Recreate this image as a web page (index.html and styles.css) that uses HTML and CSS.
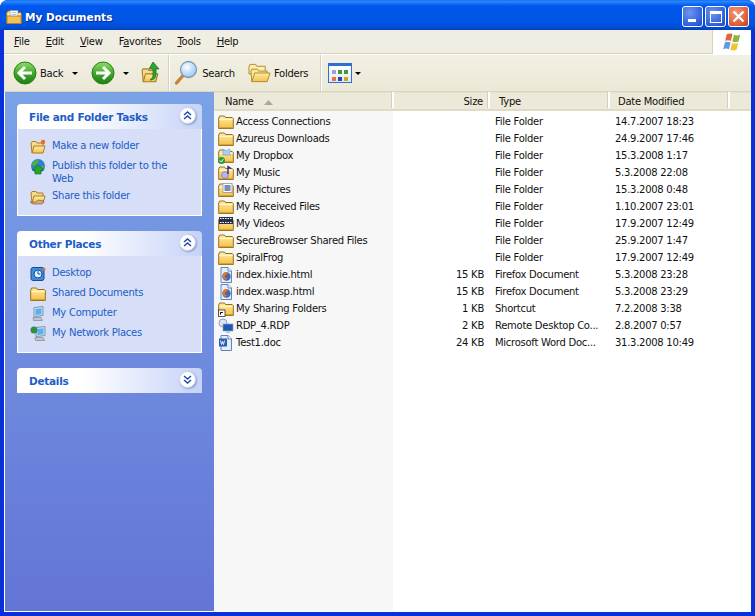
FILE: index.html
```html
<!DOCTYPE html>
<html lang="en">
<head>
<meta charset="utf-8">
<title>My Documents</title>
<link rel="stylesheet" href="styles.css">
</head>
<body>
<svg class="defs" width="0" height="0" aria-hidden="true">
  <defs>
    <linearGradient id="fold" x1="0" y1="0" x2="0" y2="1"><stop offset="0" stop-color="#ffeea6"/><stop offset="1" stop-color="#f3bf48"/></linearGradient>
    <linearGradient id="grn" x1="0" y1="0" x2="0" y2="1"><stop offset="0" stop-color="#8fdc68"/><stop offset=".55" stop-color="#3aa626"/><stop offset="1" stop-color="#1c7f16"/></linearGradient>
    <radialGradient id="lens" cx=".4" cy=".35" r=".7"><stop offset="0" stop-color="#fff"/><stop offset="1" stop-color="#8fc3f2"/></radialGradient>
    <symbol id="folder" viewBox="0 0 16 16">
      <path d="M.7 4 1.700 2h4.800l1 1.500H14.300l1 1V14.500H.7z" fill="url(#fold)" stroke="#96701c" stroke-width="1" stroke-linejoin="round"/>
      <path d="M1.500 5.500h13" stroke="#fff6cc" stroke-width="1"/>
      <path d="M1.500 13.700h13" stroke="#d49a28" stroke-width="1"/>
    </symbol>
    <symbol id="openfolder" viewBox="0 0 16 16">
      <path d="M2 14 1 4l1-1.500h4L7 4h6v3" fill="#f6d98a" stroke="#a97e24"/>
      <path d="M2 14 4 7h11l-2 7z" fill="url(#fold)" stroke="#a97e24" stroke-linejoin="round"/>
    </symbol>
    <symbol id="doc" viewBox="0 0 16 16">
      <path d="M3 .5h7l3.500 3.500v11.500H3z" fill="#e4eefa" stroke="#5e86bc"/>
      <path d="M10 .5v3.500h3.500" fill="#fff" stroke="#5e86bc"/>
    </symbol>
    <symbol id="globe" viewBox="0 0 16 16">
      <circle cx="8" cy="7" r="7" fill="#2f7fd8"/>
      <path d="M3 3c2-2 5-2 6-1 0 2-2 2-3 4S3 6 2 6zM11 7c2-1 3 0 3 1-1 2-3 3-3 2z" fill="#4fae3c"/>
      <path d="M8 6l6 5h-3v4H5v-4H2z" fill="#22a82a" stroke="#0f6a14" stroke-width=".6"/>
    </symbol>
    <symbol id="pc" viewBox="0 0 16 16">
      <path d="M4 1.500 13 .500v9l-9 1z" fill="#cfe0f4" stroke="#7f94ae"/>
      <path d="M5.500 3 11.500 2.200v6l-6 .8z" fill="#58b0ee"/>
      <path d="M3 11.500h8l1.500 3h-9z" fill="#c2c6cf" stroke="#7f8694" stroke-width=".7"/>
    </symbol>
    <symbol id="ff" viewBox="0 0 16 16">
      <use href="#doc"/>
      <circle cx="8.500" cy="9.500" r="4.200" fill="#3c68b8"/>
      <path d="M5 7c1-2 4-2.500 5.500-1.500L9 6.500c.8.200 1 .8.300 1.200-1.500-.5-2.500 .5-2.300 2 .2 1.500 2 2 3.500 1-1 1.300-2.800 2.200-4 1.800C4.500 11.500 4.300 9 5 7z" fill="#e8761e"/>
    </symbol>
  </defs>
</svg>

<div class="window">
  <header class="titlebar">
    <svg class="title-icon" viewBox="0 0 16 16"><use href="#folder"/><path d="M4 1.500h8v7H4z" fill="#fff" stroke="#8c96a8" stroke-width=".7"/><path d="M5.500 3.500h5M5.500 5.500h5" stroke="#9fb1ce" stroke-width=".8"/><path d="M1 7h14v7.500H1z" fill="#efc25d" stroke="#a97e24" stroke-width=".8"/></svg>
    <span class="title-text">My Documents</span>
    <div class="win-btns">
      <div class="win-btn"><span class="glyph-min"></span></div>
      <div class="win-btn"><span class="glyph-max"></span></div>
      <div class="win-btn close"><svg viewBox="0 0 13 13" class="glyph-x"><path d="M1.500 1.500l10 10M11.500 1.500l-10 10" stroke="#fff" stroke-width="2.400"/></svg></div>
    </div>
  </header>

  <nav class="menubar">
    <div class="menus">
      <span><u>F</u>ile</span><span><u>E</u>dit</span><span><u>V</u>iew</span><span>F<u>a</u>vorites</span><span><u>T</u>ools</span><span><u>H</u>elp</span>
    </div>
    <div class="brand">
      <svg viewBox="0 0 24 20" class="flag">
        <path d="M6 2c2-1 5-1 6 0l-1.700 7c-2-1-4-1-6 0z" fill="#e8643a"/>
        <path d="M13.500 2.500c2 1 4 1 6.500 0l-1.700 7c-2.500 1-4.500 1-6.500 0z" fill="#8ab83c"/>
        <path d="M4 10.500c2-1 4-1 6 0L8.300 17.500c-2-1-4-1-6 0z" fill="#5a9ae6"/>
        <path d="M11.500 11c2 1 4 1 6.500 0l-1.800 7c-2.500 1-4.500 1-6.400 0z" fill="#f2c230"/>
      </svg>
    </div>
  </nav>

  <div class="toolbar">
    <svg class="nav-ic" viewBox="0 0 24 24"><circle cx="12" cy="12" r="11" fill="url(#grn)" stroke="#2b7a1e"/><path d="M19 12H7M12 6l-6 6 6 6" fill="none" stroke="#fff" stroke-width="3"/></svg>
    <span class="tb-label back-label">Back</span>
    <span class="caret back-caret"></span>
    <svg class="nav-ic fwd" viewBox="0 0 24 24"><circle cx="12" cy="12" r="11" fill="url(#grn)" stroke="#2b7a1e"/><path d="M5 12h12M12 6l6 6-6 6" fill="none" stroke="#fff" stroke-width="3"/></svg>
    <span class="caret fwd-caret"></span>
    <svg class="up-ic" viewBox="0 0 20 24"><use href="#openfolder" x="0" y="4" width="18" height="20"/><path d="M12 1 18 8h-3v6c0 3-3 5-6 5 2-1 3-3 3-5V8H8z" fill="#2fa52f" stroke="#11691a" stroke-width=".7"/></svg>
    <span class="tb-sep first-sep"></span>
    <svg class="search-ic" viewBox="0 0 24 26"><path d="M9.500 15 2.500 23" stroke="#c8823a" stroke-width="3.400" stroke-linecap="round"/><circle cx="14.500" cy="9.500" r="8" fill="url(#lens)" stroke="#7e9ab8" stroke-width="1.300"/></svg>
    <span class="tb-label search-label">Search</span>
    <svg class="folders-ic" viewBox="0 0 24 20"><path d="M1 4 2 1h6l1 2h9v8H1z" fill="#fdeeb0" stroke="#b08a2c"/><path d="M4 19 3 8l1-2h6l1 2h9v2" fill="#fbe59a" stroke="#b08a2c"/><path d="M4 19 7 10h16l-3 9z" fill="url(#fold)" stroke="#b08a2c" stroke-linejoin="round"/></svg>
    <span class="tb-label">Folders</span>
    <span class="tb-sep second-sep"></span>
    <div class="views-ic">
      <i class="c1"></i><i class="c2"></i><i class="c3"></i>
      <i class="c4"></i><i class="c5"></i><i class="c6"></i>
    </div>
    <span class="caret views-caret"></span>
  </div>

  <main class="content">
    <aside class="sidebar">
      <section class="panel">
        <div class="panel-head"><span class="head-title">File and Folder Tasks</span><span class="chev"><svg viewBox="0 0 9 9"><path d="M1 4 4.500 1 8 4M1 8l3.500-3L8 8" fill="none" stroke="#1d48a8" stroke-width="1.400"/></svg></span></div>
        <div class="panel-body">
          <a class="task"><svg viewBox="0 0 16 16"><use href="#openfolder"/><circle cx="13" cy="3" r="2.200" fill="#f0682a"/></svg><span>Make a new folder</span></a>
          <a class="task"><svg viewBox="0 0 16 16"><use href="#globe"/></svg><span>Publish this folder to the Web</span></a>
          <a class="task"><svg viewBox="0 0 16 16"><use href="#openfolder"/><path d="M0 13h6l2-2 6 1-2 3H3z" fill="#d8a878" stroke="#7a5030" stroke-width=".6"/></svg><span>Share this folder</span></a>
        </div>
      </section>
      <section class="panel">
        <div class="panel-head"><span class="head-title">Other Places</span><span class="chev"><svg viewBox="0 0 9 9"><path d="M1 4 4.500 1 8 4M1 8l3.500-3L8 8" fill="none" stroke="#1d48a8" stroke-width="1.400"/></svg></span></div>
        <div class="panel-body">
          <a class="task"><svg viewBox="0 0 16 16"><rect x="1" y="1.500" width="13" height="13" rx="2" fill="#3c8ce0" stroke="#174c9c"/><circle cx="8" cy="8" r="4" fill="#e8f2fc" stroke="#174c9c"/><path d="M8 5v3h2.500" stroke="#174c9c" fill="none"/><circle cx="14" cy="3" r="1.500" fill="#e86a2c"/></svg><span>Desktop</span></a>
          <a class="task"><svg viewBox="0 0 16 16"><use href="#folder"/></svg><span>Shared Documents</span></a>
          <a class="task"><svg viewBox="0 0 16 16"><use href="#pc"/></svg><span>My Computer</span></a>
          <a class="task"><svg viewBox="0 0 16 16"><use href="#pc" x="2"/><circle cx="4" cy="4" r="3.500" fill="#2f8f4a"/></svg><span>My Network Places</span></a>
        </div>
      </section>
      <section class="panel">
        <div class="panel-head"><span class="head-title">Details</span><span class="chev"><svg viewBox="0 0 9 9"><path d="M1 1l3.500 3L8 1M1 5l3.500 3L8 5" fill="none" stroke="#1d48a8" stroke-width="1.400"/></svg></span></div>
      </section>
    </aside>

    <section class="list">
      <div class="list-head">
        <div class="col col-name">Name<svg class="sort" viewBox="0 0 9 5"><path d="M4.500 0 9 5H0z" fill="#aca899"/></svg></div>
        <div class="col col-size">Size</div>
        <div class="col col-type">Type</div>
        <div class="col col-date">Date Modified</div>
        <div class="col col-rest"></div>
      </div>
      <div class="list-body">
        <div class="row"><div class="cell-name"><svg viewBox="0 0 16 16"><use href="#folder"/></svg>Access Connections</div><div class="cell-size"></div><div class="cell-type">File Folder</div><div class="cell-date">14.7.2007 18:23</div></div>
        <div class="row"><div class="cell-name"><svg viewBox="0 0 16 16"><use href="#folder"/></svg>Azureus Downloads</div><div class="cell-size"></div><div class="cell-type">File Folder</div><div class="cell-date">24.9.2007 17:46</div></div>
        <div class="row"><div class="cell-name"><svg viewBox="0 0 16 16"><use href="#folder"/><path d="M5 1l3 2 3-2 2 2-2 2 2 2H5z" fill="#a8d0f4" stroke="#5e8cc0" stroke-width=".5"/><circle cx="3.500" cy="12.500" r="3.500" fill="#2f9a38"/><path d="M1.800 12.500l1.300 1.400 2.300-2.700" stroke="#fff" stroke-width="1" fill="none"/></svg>My Dropbox</div><div class="cell-size"></div><div class="cell-type">File Folder</div><div class="cell-date">15.3.2008 1:17</div></div>
        <div class="row"><div class="cell-name"><svg viewBox="0 0 16 16"><use href="#folder"/><circle cx="7" cy="10" r="3.500" fill="#b8b4e8" stroke="#6a64b0" stroke-width=".6"/><path d="M10 9V1.500l3 2" stroke="#2c2a88" stroke-width="1.400" fill="none"/></svg>My Music</div><div class="cell-size"></div><div class="cell-type">File Folder</div><div class="cell-date">5.3.2008 22:08</div></div>
        <div class="row"><div class="cell-name"><svg viewBox="0 0 16 16"><use href="#folder"/><rect x="5" y="1.500" width="9" height="9" fill="#fff" stroke="#7c8ca8" stroke-width=".7"/><rect x="6.500" y="3" width="6" height="6" fill="#4f98dc"/><rect x="8" y="5" width="3" height="3" fill="#ee6a50"/></svg>My Pictures</div><div class="cell-size"></div><div class="cell-type">File Folder</div><div class="cell-date">15.3.2008 0:48</div></div>
        <div class="row"><div class="cell-name"><svg viewBox="0 0 16 16"><use href="#folder"/></svg>My Received Files</div><div class="cell-size"></div><div class="cell-type">File Folder</div><div class="cell-date">1.10.2007 23:01</div></div>
        <div class="row"><div class="cell-name"><svg viewBox="0 0 16 16"><use href="#folder"/><rect x="1" y="1" width="14" height="7" fill="#26304a"/><path d="M2 2.500h12M2 6.500h12" stroke="#fff" stroke-width="1" stroke-dasharray="1.500 1"/></svg>My Videos</div><div class="cell-size"></div><div class="cell-type">File Folder</div><div class="cell-date">17.9.2007 12:49</div></div>
        <div class="row"><div class="cell-name"><svg viewBox="0 0 16 16"><use href="#folder"/></svg>SecureBrowser Shared Files</div><div class="cell-size"></div><div class="cell-type">File Folder</div><div class="cell-date">25.9.2007 1:47</div></div>
        <div class="row"><div class="cell-name"><svg viewBox="0 0 16 16"><use href="#folder"/></svg>SpiralFrog</div><div class="cell-size"></div><div class="cell-type">File Folder</div><div class="cell-date">17.9.2007 12:49</div></div>
        <div class="row"><div class="cell-name"><svg viewBox="0 0 16 16"><use href="#ff"/></svg>index.hixie.html</div><div class="cell-size">15 KB</div><div class="cell-type">Firefox Document</div><div class="cell-date">5.3.2008 23:28</div></div>
        <div class="row"><div class="cell-name"><svg viewBox="0 0 16 16"><use href="#ff"/></svg>index.wasp.html</div><div class="cell-size">15 KB</div><div class="cell-type">Firefox Document</div><div class="cell-date">5.3.2008 23:29</div></div>
        <div class="row"><div class="cell-name"><svg viewBox="0 0 16 16"><use href="#folder"/><rect x=".5" y="9" width="6.500" height="6.500" fill="#fff" stroke="#333" stroke-width=".8"/><path d="M2.500 13.500V11.500h2M2.500 11.500l2 0" stroke="#000" stroke-width="1" fill="none"/></svg>My Sharing Folders</div><div class="cell-size">1 KB</div><div class="cell-type">Shortcut</div><div class="cell-date">7.2.2008 3:38</div></div>
        <div class="row"><div class="cell-name"><svg viewBox="0 0 16 16"><circle cx="5" cy="5" r="4" fill="#dfe8f2" stroke="#8ea2b8"/><rect x="5" y="6" width="10" height="7" fill="#2058b8" stroke="#8ea2b8" stroke-width=".7"/><path d="M8 13.500v1.500h4v-1.500" fill="#b8c0cc"/></svg>RDP_4.RDP</div><div class="cell-size">2 KB</div><div class="cell-type">Remote Desktop Co...</div><div class="cell-date">2.8.2007 0:57</div></div>
        <div class="row"><div class="cell-name"><svg viewBox="0 0 16 16"><use href="#doc"/><rect x="1" y="3.500" width="8" height="8" fill="#2a5cb8"/><path d="M2.500 5.500l1 4 1-3 1 3 1-4" fill="none" stroke="#fff" stroke-width=".9"/></svg>Test1.doc</div><div class="cell-size">24 KB</div><div class="cell-type">Microsoft Word Doc...</div><div class="cell-date">31.3.2008 10:49</div></div>
      </div>
    </section>
  </main>
</div>
</body>
</html>
```
FILE: styles.css
```css
* { box-sizing: border-box; }
html, body { margin: 0; height: 100%; background: #fff; }
body { font-family: "DejaVu Sans", sans-serif; font-size: 10px; letter-spacing: -.27px; color: #000; overflow: hidden; }
.defs { position: absolute; }
svg { display: block; flex: none; }

.window {
  width: 755px; height: 616px; display: flex; flex-direction: column;
  border-radius: 8px 8px 0 0; overflow: hidden;
  background: #0831d9;
}

.titlebar {
  height: 30px; flex: none; display: flex; align-items: center; padding: 3px 6px 0 6px;
  background: linear-gradient(#0a5fe6 0, #2f8cff 1px, #1a74f8 3px, #0058ee 6px, #0055e5 12px, #0056e8 20px, #0050dc 26px, #0042c0 30px);
}
.title-icon { width: 16px; height: 16px; margin-right: 3px; }
.title-text { color: #fff; font-weight: bold; font-size: 10.500px; letter-spacing: 0; text-shadow: 1px 1px 1px #0a2a8c; flex: 1; }
.win-btns { display: flex; gap: 2px; }
.win-btn {
  width: 21px; height: 21px; border: 1px solid #fff; border-radius: 3px; position: relative;
  background: radial-gradient(circle at 35% 30%, #6f96ee, #2f5fdc 70%, #2348b8);
  display: flex; align-items: center; justify-content: center;
}
.win-btn.close { background: radial-gradient(circle at 35% 30%, #ee9a7a, #dc5a34 70%, #b83a18); }
.glyph-min { width: 8px; height: 3px; background: #fff; position: absolute; left: 5px; bottom: 4px; }
.glyph-max { width: 12px; height: 12px; border: 1px solid #fff; border-top-width: 3px; }
.glyph-x { width: 13px; height: 13px; }

.menubar {
  height: 24px; flex: none; margin: 0 4px; display: flex; justify-content: space-between;
  background: #f0eee2; border-bottom: 1px solid #d8d2bd; box-shadow: inset 0 -1px 0 #f0eee2;
}
.menus { display: flex; gap: 16px; padding: 6px 0 0 10px; font-size: 10px; color: #111; }
.brand {
  width: 39px; background: #fff; border-left: 1px solid #d8d2bd; display: flex; align-items: center;
  justify-content: center; margin-bottom: -1px;
}
.flag { width: 23px; height: 20px; }

.toolbar {
  height: 38px; flex: none; margin: 0 4px; display: flex; align-items: center; padding-left: 9px;
  background: linear-gradient(#f2f0e4, #ebe8d7); border-bottom: 1px solid #d8d4c2; border-top: 1px solid #fff;
}
.nav-ic { width: 24px; height: 24px; }
.tb-label { font-size: 10px; color: #111; }
.back-label { margin-left: 3px; }
.caret { width: 0; height: 0; border: 3px solid transparent; border-top: 3px solid #000; border-bottom: 0; flex: none; }
.back-caret { margin-left: 9px; }
.fwd { margin-left: 13px; }
.fwd-caret { margin-left: 8px; }
.up-ic { width: 20px; height: 24px; margin-left: 12px; }
.tb-sep { width: 2px; height: 36px; background: #d6d2c0; border-right: 1px solid #fff; }
.first-sep { margin-left: 7px; }
.search-ic { width: 24px; height: 26px; margin-left: 4px; }
.search-label { margin-left: 4px; }
.folders-ic { width: 23px; height: 20px; margin: 0 3px 0 13px; }
.second-sep { margin-left: 12px; }
.views-ic {
  width: 24px; height: 20px; margin-left: 6px; padding: 5px 3px 2px; display: grid; grid-template-columns: repeat(3, 4px);
  gap: 3px 2px; justify-content: center; align-content: center;
  border: 1px solid #2f6fd0; border-top-width: 3px; background: linear-gradient(#fff, #dfe8f6);
}
.views-ic i { display: block; height: 4px; }
.c1 { background: #a0a0d8; } .c2 { background: #3f9a3a; } .c3 { background: #3f9a3a; }
.c4 { background: #f0703a; } .c5 { background: #1f4aa8; } .c6 { background: #d8a020; }
.views-caret { margin-left: 3px; }

.content {
  flex: 1; min-height: 0; display: flex; margin: 0 4px 4px; background: #fff; border-left: 1px solid #fff; border-bottom: 1px solid #fff;
}
.sidebar {
  width: 209px; flex: none; padding: 12px 12px 0 12px; display: flex; flex-direction: column; gap: 15px;
  background: linear-gradient(#7ba2e7, #6375d6);
}
.panel-head {
  height: 25px; display: flex; align-items: center; justify-content: space-between; padding: 0 6px 3px 12px;
  border-radius: 4px 4px 0 0; background: linear-gradient(90deg, #fff 35%, #c6d3f7);
  color: #215dc6; font-weight: bold; font-size: 10.500px;
}
.head-title { padding-top: 3px; }
.chev {
  width: 17px; height: 17px; border-radius: 50%; background: #fff; border: 1px solid #c6d3f0;
  box-shadow: 1px 1px 2px #8a9ccc; display: flex; align-items: center; justify-content: center;
}
.chev svg { width: 9px; height: 9px; }
.panel-body {
  background: #d6dff7; border: 1px solid #fff; border-top: 0; padding: 10px 24px 10px 12px;
  display: flex; flex-direction: column; gap: 4px;
}
.task { display: flex; gap: 6px; color: #215dc6; line-height: 13px; min-height: 16px; align-items: flex-start; }
.task svg { width: 16px; height: 16px; }

.list { flex: 1; min-width: 0; display: flex; flex-direction: column; }
.list-head {
  height: 19px; flex: none; display: grid; grid-template-columns: 180px 96px 120px 120px 1fr;
  background: #ece9d8; border-bottom: 2px solid #dedbc8; box-shadow: inset 0 1px 0 #e3e0cf; color: #111;
}
.col { padding-top: 4px; border-right: 2px solid #fff; box-shadow: inset -1px 0 0 #d2cfbc; margin-bottom: 3px; line-height: 12px; }
.col-rest { border-right: 0; box-shadow: none; }
.col-name { padding-left: 11px; display: flex; gap: 11px; }
.sort { width: 9px; height: 5px; margin-top: 4px; }
.col-size { text-align: right; padding-right: 5px; }
.col-type { padding-left: 9px; }
.col-date { padding-left: 8px; }
.list-body {
  flex: 1; padding-top: 2px;
  background: linear-gradient(90deg, #f7f7f7 179px, #fff 179px);
}
.row { height: 17px; display: grid; grid-template-columns: 179px 96px 120px 120px; align-items: center; color: #111; white-space: nowrap; }
.cell-name { display: flex; align-items: center; gap: 2px; padding-left: 4px; }
.cell-name svg { width: 16px; height: 16px; }
.cell-size { text-align: right; padding-right: 5px; }
.cell-type { padding-left: 6px; }
.cell-date { padding-left: 6px; }
```
